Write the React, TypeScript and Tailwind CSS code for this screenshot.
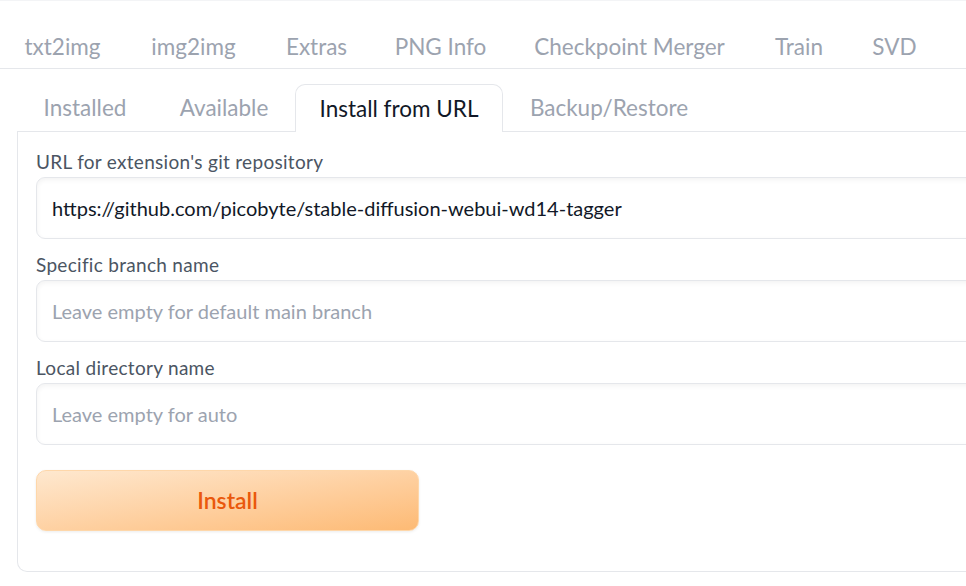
import React from "react";

const navTabs: [string, string][] = [
  ["txt2img", "w-[125px]"],
  ["img2img", "w-[137px]"],
  ["Extras", "w-[109px]"],
  ["PNG Info", "w-[139px]"],
  ["Checkpoint Merger", "w-[239px]"],
  ["Train", "w-[100px]"],
  ["SVD", "w-[91px]"],
  ["Settings", "w-[140px]"],
];
const subTabs: [string, string][] = [
  ["Installed", "w-[136px]"],
  ["Available", "w-[142px]"],
  ["Install from URL", "w-[208px]"],
  ["Backup/Restore", "w-[212px]"],
];

function Field({ label, value, placeholder }: { label: string; value?: string; placeholder?: string }) {
  return (
    <div className="flex flex-col">
      <div className="h-[41px] flex items-end pb-[3px] text-[19px] leading-[24px] tracking-[0.3px] text-[#4b5563]">{label}</div>
      <div className="h-[62px] w-[980px] rounded-[9px] border border-[#e5e7eb] bg-white shadow-[inset_0_2px_5px_rgba(0,0,0,0.05)] flex items-center pl-[15px] text-[20px]">
        {value ? (
          <span className="text-[#111827]">{value}</span>
        ) : (
          <span className="text-[#9ca3af]">{placeholder}</span>
        )}
      </div>
    </div>
  );
}

export default function App() {
  return (
    <div
      className="w-[966px] h-[586px] overflow-hidden bg-white border-t border-[#f3f4f6]"
      style={{ fontFamily: "Lato, 'Noto Sans', sans-serif" }}
    >
      <div className="h-[68px] border-b border-[#e5e7eb] flex items-end pb-[6px] whitespace-nowrap">
        {navTabs.map(([t, w]) => (
          <span key={t} className={`${w} shrink-0 text-center text-[22.5px] leading-[30px] text-[#9ca3af]`}>
            {t}
          </span>
        ))}
      </div>
      <div className="ml-[17px] w-[1000px] mt-[15px]">
        <div className="flex h-[48px] border-b border-[#e5e7eb] items-stretch whitespace-nowrap">
          {subTabs.map(([t, w]) => {
            const sel = t === "Install from URL";
            return (
              <div
                key={t}
                className={
                  sel
                    ? `${w} shrink-0 flex items-center justify-center text-[22.5px] text-[#111827] bg-white border border-b-0 border-[#e5e7eb] rounded-t-[10px] -mb-px`
                    : `${w} shrink-0 flex items-center justify-center text-[22.5px] text-[#9ca3af]`
                }
              >
                {t}
              </div>
            );
          })}
        </div>
        <div className="h-[440px] border border-t-0 border-[#e5e7eb] rounded-b-[10px] pl-[18px] pt-[4px]">
          <Field label="URL for extension's git repository" value="https://github.com/picobyte/stable-diffusion-webui-wd14-tagger" />
          <Field label="Specific branch name" placeholder="Leave empty for default main branch" />
          <Field label="Local directory name" placeholder="Leave empty for auto" />
          <button className="mt-[25px] w-[383px] h-[61px] rounded-[10px] border border-[#fed7aa] bg-gradient-to-br from-[#fee8cf] to-[#fdba74] shadow-[0_1px_3px_rgba(0,0,0,0.08)] text-[23px] font-semibold text-[#ea580c]">
            Install
          </button>
        </div>
      </div>
    </div>
  );
}
